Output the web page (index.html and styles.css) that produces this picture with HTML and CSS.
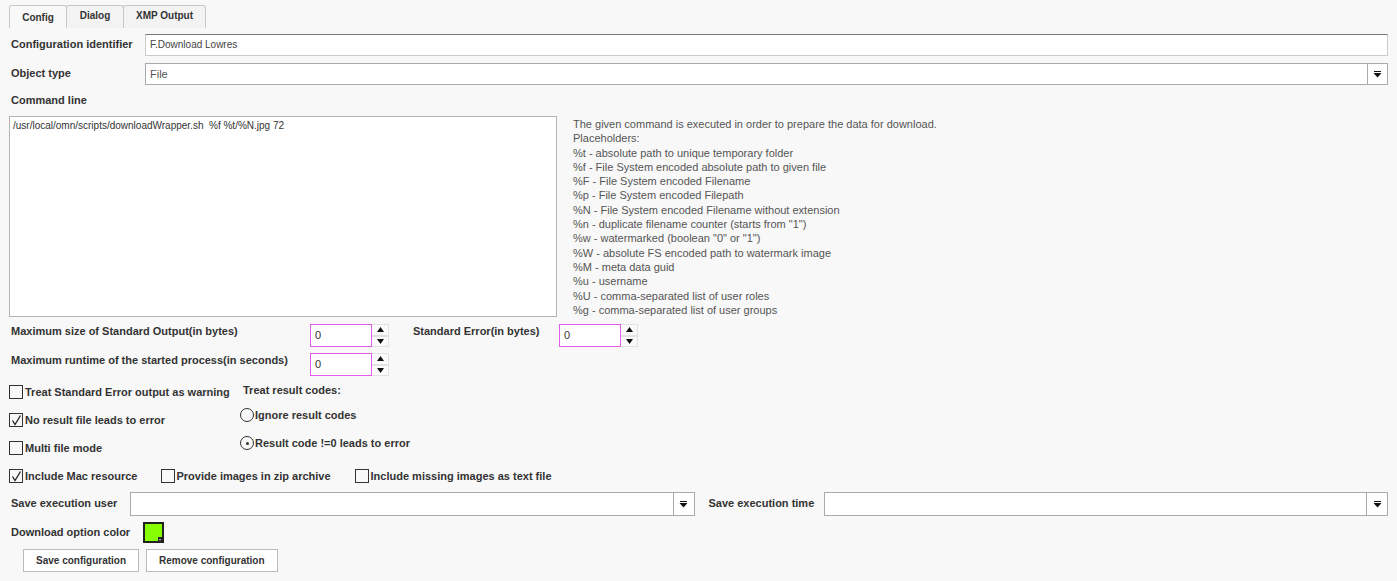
FILE: index.html
```html
<!DOCTYPE html>
<html lang="en">
<head>
    <meta charset="UTF-8">
    <title>Download configuration</title>
    <link rel="stylesheet" href="styles.css">
</head>
<body>
    <div class="tabs">
        <div class="tab active">Config</div>
        <div class="tab">Dialog</div>
        <div class="tab tab-wide">XMP Output</div>
    </div>

    <div class="form">
        <div class="row row-id">
            <label class="lbl">Configuration identifier</label>
            <div class="input">F.Download Lowres</div>
        </div>

        <div class="row row-type">
            <label class="lbl">Object type</label>
            <div class="select">
                <span class="select-value">File</span>
                <span class="select-btn">
                    <svg width="9" height="7" viewBox="0 0 9 7"><rect x="1" y="0" width="7" height="1" fill="#111"/><path d="M0.5 2 L8.5 2 L4.5 6.5 Z" fill="#111"/></svg>
                </span>
            </div>
        </div>

        <div class="lbl cmd-label">Command line</div>

        <div class="cmd-row">
            <div class="textarea">/usr/local/omn/scripts/downloadWrapper.sh&nbsp; %f %t/%N.jpg 72</div>
            <div class="help">
                The given command is executed in order to prepare the data for download.<br>
                Placeholders:<br>
                %t - absolute path to unique temporary folder<br>
                %f - File System encoded absolute path to given file<br>
                %F - File System encoded Filename<br>
                %p - File System encoded Filepath<br>
                %N - File System encoded Filename without extension<br>
                %n - duplicate filename counter (starts from "1")<br>
                %w - watermarked (boolean "0" or "1")<br>
                %W - absolute FS encoded path to watermark image<br>
                %M - meta data guid<br>
                %u - username<br>
                %U - comma-separated list of user roles<br>
                %g - comma-separated list of user groups
            </div>
        </div>

        <div class="spin-row first">
            <label class="lbl spin-lbl">Maximum size of Standard Output(in bytes)</label>
            <div class="spinner">
                <div class="spin-input">0</div>
                <div class="spin-btns">
                    <span class="spin-btn"><svg width="7" height="5" viewBox="0 0 7 5"><path d="M0 5 L7 5 L3.5 0 Z" fill="#111"/></svg></span>
                    <span class="spin-btn"><svg width="7" height="5" viewBox="0 0 7 5"><path d="M0 0 L7 0 L3.5 5 Z" fill="#111"/></svg></span>
                </div>
            </div>
            <label class="lbl spin-lbl2">Standard Error(in bytes)</label>
            <div class="spinner">
                <div class="spin-input">0</div>
                <div class="spin-btns">
                    <span class="spin-btn"><svg width="7" height="5" viewBox="0 0 7 5"><path d="M0 5 L7 5 L3.5 0 Z" fill="#111"/></svg></span>
                    <span class="spin-btn"><svg width="7" height="5" viewBox="0 0 7 5"><path d="M0 0 L7 0 L3.5 5 Z" fill="#111"/></svg></span>
                </div>
            </div>
        </div>

        <div class="spin-row">
            <label class="lbl spin-lbl">Maximum runtime of the started process(in seconds)</label>
            <div class="spinner">
                <div class="spin-input">0</div>
                <div class="spin-btns">
                    <span class="spin-btn"><svg width="7" height="5" viewBox="0 0 7 5"><path d="M0 5 L7 5 L3.5 0 Z" fill="#111"/></svg></span>
                    <span class="spin-btn"><svg width="7" height="5" viewBox="0 0 7 5"><path d="M0 0 L7 0 L3.5 5 Z" fill="#111"/></svg></span>
                </div>
            </div>
        </div>

        <div class="options">
            <div class="opt-col">
                <div class="check"><span class="box"></span>Treat Standard Error output as warning</div>
                <div class="check"><span class="box"><svg width="11" height="11" viewBox="0 0 11 11"><path d="M1.5 5.5 L4 9.5 L9.5 0.5" fill="none" stroke="#222" stroke-width="1.3"/></svg></span>No result file leads to error</div>
                <div class="check"><span class="box"></span>Multi file mode</div>
            </div>
            <div class="result-col">
                <div class="lbl result-title">Treat result codes:</div>
                <div class="radio"><span class="circle"></span>Ignore result codes</div>
                <div class="radio"><span class="circle on"></span>Result code !=0 leads to error</div>
            </div>
        </div>

        <div class="check-line">
            <div class="check"><span class="box"><svg width="11" height="11" viewBox="0 0 11 11"><path d="M1.5 5.5 L4 9.5 L9.5 0.5" fill="none" stroke="#222" stroke-width="1.3"/></svg></span>Include Mac resource</div>
            <div class="check"><span class="box"></span>Provide images in zip archive</div>
            <div class="check"><span class="box"></span>Include missing images as text file</div>
        </div>

        <div class="exec-row">
            <label class="lbl exec-user">Save execution user</label>
            <div class="select">
                <span class="select-value"></span>
                <span class="select-btn">
                    <svg width="9" height="7" viewBox="0 0 9 7"><rect x="1" y="0" width="7" height="1" fill="#111"/><path d="M0.5 2 L8.5 2 L4.5 6.5 Z" fill="#111"/></svg>
                </span>
            </div>
            <label class="lbl exec-time">Save execution time</label>
            <div class="select">
                <span class="select-value"></span>
                <span class="select-btn">
                    <svg width="9" height="7" viewBox="0 0 9 7"><rect x="1" y="0" width="7" height="1" fill="#111"/><path d="M0.5 2 L8.5 2 L4.5 6.5 Z" fill="#111"/></svg>
                </span>
            </div>
        </div>

        <div class="color-row">
            <label class="lbl color-lbl">Download option color</label>
            <span class="swatch"><span class="swatch-corner"></span></span>
        </div>

        <div class="buttons">
            <button>Save configuration</button>
            <button>Remove configuration</button>
        </div>
    </div>
</body>
</html>
```

FILE: styles.css
```css
body {
    margin: 0;
    background-color: #f8f8f8;
    font-family: "Liberation Sans", Arial, sans-serif;
    font-size: 11px;
    color: #333;
}

/* Tabs */
.tabs {
    display: flex;
    padding: 5px 0 0 9px;
    height: 23px;
}
.tab {
    box-sizing: border-box;
    width: 58px;
    height: 23px;
    padding-top: 4px;
    text-align: center;
    white-space: nowrap;
    border: 1px solid #c8c8c8;
    border-bottom: none;
    border-radius: 3px 3px 0 0;
    background-color: #f3f3f3;
    font-size: 10px;
    font-weight: bold;
    color: #333;
}
.tab.active {
    background-color: #f8f8f8;
    padding-top: 6px;
}
.tab-wide {
    width: 83px;
}
.tab + .tab {
    margin-left: -1px;
}

.form {
    padding: 0 9px;
}

.lbl {
    font-weight: bold;
    padding-left: 2px;
}

/* Text rows */
.row {
    display: flex;
    align-items: center;
    height: 22px;
}
.row-id {
    margin-top: 6px;
}
.row-type {
    margin-top: 7px;
}
.row .lbl {
    width: 134px;
    flex: none;
    margin-top: -2px;
}
.input {
    flex: 1;
    box-sizing: border-box;
    height: 22px;
    line-height: 20px;
    padding-left: 4px;
    background-color: #fff;
    border: 1px solid #ccc;
    border-top-color: #777;
    font-size: 10px;
    color: #444;
}
.select {
    flex: 1;
    display: flex;
    box-sizing: border-box;
    height: 22px;
    background-color: #fff;
    border: 1px solid #aaa;
}
.select-value {
    flex: 1;
    line-height: 20px;
    padding-left: 4px;
    color: #555;
}
.select-btn {
    width: 19px;
    border-left: 1px solid #aaa;
    display: flex;
    align-items: center;
    justify-content: center;
}

/* Command line */
.cmd-label {
    margin-top: 9px;
    height: 16px;
}
.cmd-row {
    display: flex;
    margin-top: 6px;
}
.textarea {
    box-sizing: border-box;
    width: 548px;
    height: 201px;
    padding: 3px 3px;
    background-color: #fff;
    border: 1px solid #b4b4b4;
    font-size: 10px;
    color: #333;
}
.help {
    margin-left: 16px;
    margin-top: 1px;
    line-height: 14.3px;
    font-size: 11px;
    color: #555;
}

/* Spinner rows */
.spin-row {
    display: flex;
    align-items: flex-start;
    height: 23px;
    margin-top: 6px;
}
.spin-row.first {
    margin-top: 7px;
}
.spin-lbl {
    width: 299px;
    padding-top: 1px;
}
.spin-lbl2 {
    width: 146px;
    margin-left: 22px;
    padding-top: 1px;
}
.spinner {
    display: flex;
}
.spin-input {
    box-sizing: border-box;
    width: 62px;
    height: 23px;
    line-height: 21px;
    padding-left: 4px;
    background-color: #fff;
    border: 1px solid #e45ce8;
}
.spin-btns {
    display: flex;
    flex-direction: column;
}
.spin-btn {
    box-sizing: border-box;
    width: 17px;
    height: 11.5px;
    border: 1px solid #e2e2e2;
    border-left: none;
    background-color: #fafafa;
    display: flex;
    align-items: center;
    justify-content: center;
}

/* Checkbox / radio area */
.options {
    display: flex;
    margin-top: 9px;
}
.opt-col {
    width: 232px;
}
.check {
    display: flex;
    align-items: center;
    height: 14px;
    font-weight: bold;
}
.opt-col .check + .check {
    margin-top: 14px;
}
.box {
    box-sizing: border-box;
    width: 14px;
    height: 14px;
    border: 1px solid #333;
    margin-right: 2px;
    display: flex;
    align-items: center;
    justify-content: center;
}
.result-title {
    margin-top: -1px;
}
.radio {
    display: flex;
    align-items: center;
    height: 14px;
    font-weight: bold;
    margin-left: -1px;
    margin-top: 12px;
}
.radio + .radio {
    margin-top: 14px;
}
.circle {
    box-sizing: border-box;
    width: 14px;
    height: 14px;
    border: 1px solid #333;
    border-radius: 50%;
    margin-right: 1px;
    display: flex;
    align-items: center;
    justify-content: center;
}
.circle.on::after {
    content: "";
    width: 3px;
    height: 3px;
    border-radius: 50%;
    background-color: #333;
}

.check-line {
    display: flex;
    margin-top: 14px;
}
.check-line .check + .check {
    margin-left: 23px;
}
.check-line .check:nth-child(3) {
    margin-left: 24px;
}

/* Execution selects */
.exec-row {
    display: flex;
    align-items: center;
    height: 24px;
    margin-top: 9px;
}
.exec-row .select {
    height: 24px;
}
.exec-row .select-btn {
    width: 20px;
}
.exec-user {
    width: 119px;
    margin-top: -2px;
}
.exec-time {
    width: 115px;
    margin-left: 12px;
    margin-top: -2px;
}

/* Color */
.color-row {
    display: flex;
    align-items: center;
    margin-top: 6px;
    height: 21px;
}
.color-lbl {
    width: 132px;
    margin-top: -2px;
}
.swatch {
    position: relative;
    box-sizing: border-box;
    width: 21px;
    height: 21px;
    border: 2px solid #222;
    background-color: #88ff00;
}
.swatch-corner {
    position: absolute;
    right: -1px;
    bottom: -1px;
    width: 5px;
    height: 5px;
    background-color: #222;
}
.swatch-corner::after {
    content: "";
    position: absolute;
    left: 1px;
    top: 2px;
    border-left: 1.5px solid transparent;
    border-right: 1.5px solid transparent;
    border-top: 2px solid #ddd;
}

/* Buttons */
.buttons {
    display: flex;
    margin-top: 6px;
    padding-left: 14px;
}
button {
    height: 23px;
    padding: 0 12px;
    margin-right: 7px;
    background-color: #fff;
    border: 1px solid #bbb;
    border-radius: 0;
    font-family: "Liberation Sans", Arial, sans-serif;
    font-size: 10px;
    font-weight: bold;
    color: #333;
}
```
